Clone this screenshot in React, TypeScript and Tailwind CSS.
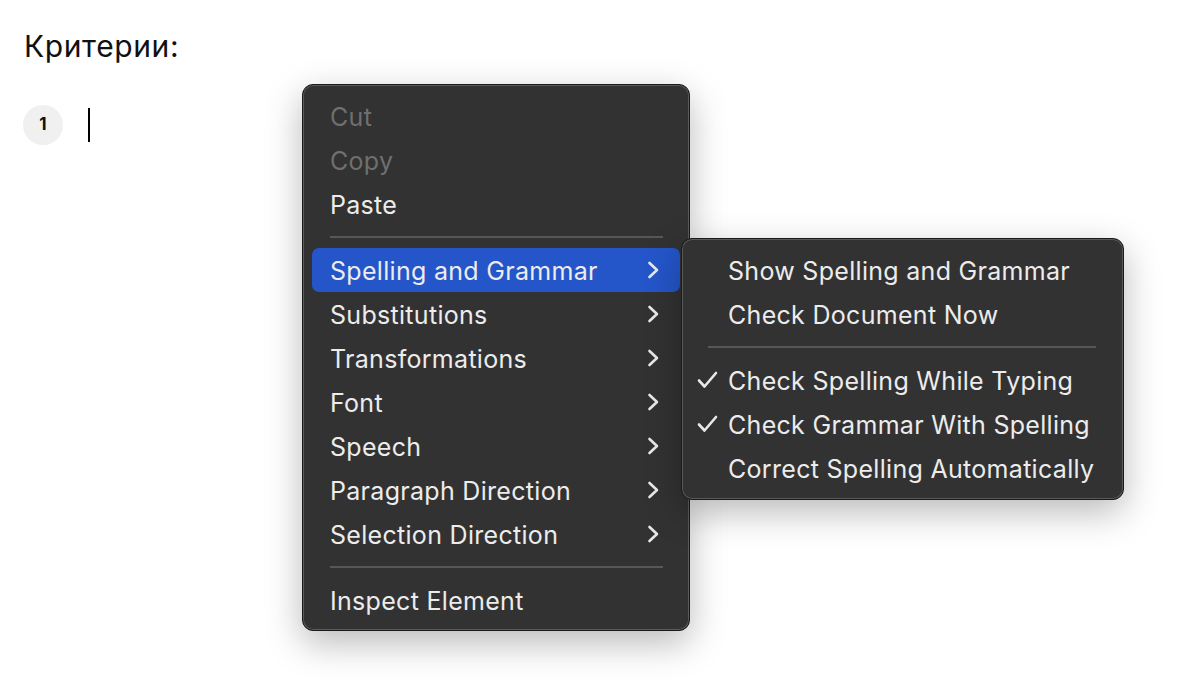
import React from "react";

const FONT = { fontFamily: "Inter, 'Noto Sans', sans-serif" };

function Chevron() {
  return (
    <svg width="13" height="18" viewBox="0 0 13 18" className="shrink-0">
      <polyline points="2.5,2 10,9 2.5,16" fill="none" stroke="#e8e8e8" strokeWidth="2.6" strokeLinecap="round" strokeLinejoin="round" />
    </svg>
  );
}

function Check() {
  return (
    <svg width="21" height="18" viewBox="0 0 21 18" className="shrink-0">
      <polyline points="2,9.5 7.5,15.5 19,2" fill="none" stroke="#e8e8e8" strokeWidth="2.6" strokeLinecap="round" strokeLinejoin="round" />
    </svg>
  );
}

type Item = { label: string; disabled?: boolean; sub?: boolean; active?: boolean } | "sep";

const mainItems: Item[] = [
  { label: "Cut", disabled: true },
  { label: "Copy", disabled: true },
  { label: "Paste" },
  "sep",
  { label: "Spelling and Grammar", sub: true, active: true },
  { label: "Substitutions", sub: true },
  { label: "Transformations", sub: true },
  { label: "Font", sub: true },
  { label: "Speech", sub: true },
  { label: "Paragraph Direction", sub: true },
  { label: "Selection Direction", sub: true },
  "sep",
  { label: "Inspect Element" },
];

const subItems: ({ label: string; checked?: boolean } | "sep")[] = [
  { label: "Show Spelling and Grammar" },
  { label: "Check Document Now" },
  "sep",
  { label: "Check Spelling While Typing", checked: true },
  { label: "Check Grammar With Spelling", checked: true },
  { label: "Correct Spelling Automatically" },
];

export default function App() {
  return (
    <div className="relative w-[1182px] h-[694px] bg-white overflow-hidden" style={FONT}>
      <div className="flex flex-col pl-[24px] pt-[29px]">
        <div className="text-[30px] leading-[34px] text-[#111] tracking-[0.6px]">Критерии:</div>
        <div className="flex items-center mt-[42px] -ml-[1px] h-[40px]">
          <div className="w-[40px] h-[40px] rounded-full bg-[#f0f0f0] flex items-center justify-center text-[17px] font-bold text-[#111]">1</div>
          <div className="ml-[25px] w-[2px] h-[34px] bg-black" />
        </div>
      </div>

      {/* Main context menu */}
      <div
        className="absolute left-[302px] top-[84px] w-[388px] h-[547px] rounded-[11px] border border-[#1a1a1a] bg-[#323232] shadow-[0_12px_36px_rgba(0,0,0,0.28),inset_0_0_0_1px_#5a5a5a] px-[9px] pt-[9px] flex flex-col"
      >
        {mainItems.map((it, i) =>
          it === "sep" ? (
            <div key={i} className="h-[22px] flex items-center pl-[18px] pr-[17px]">
              <div className="w-full h-[1.5px] bg-[#575757]" />
            </div>
          ) : (
            <div
              key={i}
              className={`h-[44px] flex items-center justify-between pl-[18px] pr-[20px] rounded-[7px] ${it.active ? "bg-[#2456c9]" : ""}`}
            >
              <span className={`text-[25px] leading-[30px] pt-[2px] tracking-[0.3px] ${it.disabled ? "text-[#6f6f6f]" : "text-[#ececec]"}`}>{it.label}</span>
              {it.sub && <Chevron />}
            </div>
          )
        )}
      </div>

      {/* Submenu */}
      <div
        className="absolute left-[681px] top-[238px] w-[443px] h-[262px] rounded-[11px] border border-[#1a1a1a] bg-[#323232] shadow-[0_12px_36px_rgba(0,0,0,0.28),inset_0_0_0_1px_#5a5a5a] px-[9px] pt-[9px] flex flex-col"
      >
        {subItems.map((it, i) =>
          it === "sep" ? (
            <div key={i} className="h-[22px] flex items-center pl-[17px] pr-[18px]">
              <div className="w-full h-[1.5px] bg-[#575757]" />
            </div>
          ) : (
            <div key={i} className="h-[44px] flex items-center pl-[6px]">
              <div className="w-[31px] flex items-center">{it.checked && <Check />}</div>
              <span className="text-[25px] leading-[30px] pt-[2px] tracking-[0.3px] text-[#ececec]">{it.label}</span>
            </div>
          )
        )}
      </div>
    </div>
  );
}
